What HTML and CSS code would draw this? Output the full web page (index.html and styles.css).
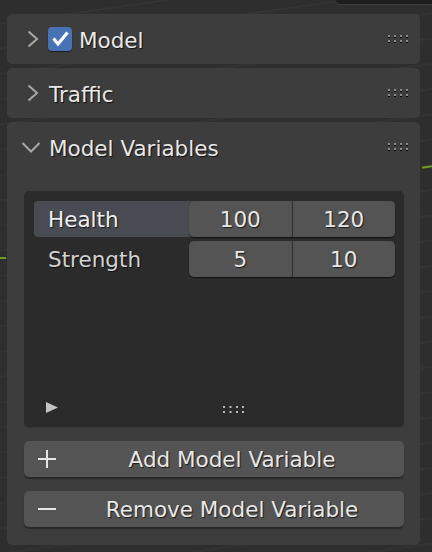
FILE: index.html
```html
<!DOCTYPE html>
<html>
<head>
<meta charset="utf-8">
<link rel="stylesheet" href="styles.css">
</head>
<body>
<div class="screen">
  <div class="topbar"></div>
  <div class="grass grass-left"></div>
  <div class="grass grass-right"></div>
  <div class="panels">
    <section class="panel">
      <div class="header">
        <svg class="chev" width="20" height="18" viewBox="0 0 20 18"><polyline points="7.5,1.5 16,9 7.5,16.5" fill="none" stroke="#a8a8a8" stroke-width="2"/></svg>
        <span class="checkbox"><svg width="24" height="24" viewBox="0 0 24 24"><polyline points="5.5,11.5 10,17 19.5,5.5" fill="none" stroke="#fff" stroke-width="3.2"/></svg></span>
        <span class="title title-check">Model</span>
        <svg class="grip" width="20" height="9" viewBox="0 0 20 9"><g fill="#8c8c8c"><rect x="0" y="0" width="2" height="2"/><rect x="6" y="0" width="2" height="2"/><rect x="12" y="0" width="2" height="2"/><rect x="18" y="0" width="2" height="2"/><rect x="0" y="5" width="2" height="2"/><rect x="6" y="5" width="2" height="2"/><rect x="12" y="5" width="2" height="2"/><rect x="18" y="5" width="2" height="2"/></g><g fill="#000"><rect x="0" y="2" width="2" height="1"/><rect x="6" y="2" width="2" height="1"/><rect x="12" y="2" width="2" height="1"/><rect x="18" y="2" width="2" height="1"/><rect x="0" y="7" width="2" height="1"/><rect x="6" y="7" width="2" height="1"/><rect x="12" y="7" width="2" height="1"/><rect x="18" y="7" width="2" height="1"/></g></svg>
      </div>
    </section>
    <section class="panel">
      <div class="header">
        <svg class="chev" width="20" height="18" viewBox="0 0 20 18"><polyline points="7.5,1.5 16,9 7.5,16.5" fill="none" stroke="#a8a8a8" stroke-width="2"/></svg>
        <span class="title">Traffic</span>
        <svg class="grip" width="20" height="9" viewBox="0 0 20 9"><g fill="#8c8c8c"><rect x="0" y="0" width="2" height="2"/><rect x="6" y="0" width="2" height="2"/><rect x="12" y="0" width="2" height="2"/><rect x="18" y="0" width="2" height="2"/><rect x="0" y="5" width="2" height="2"/><rect x="6" y="5" width="2" height="2"/><rect x="12" y="5" width="2" height="2"/><rect x="18" y="5" width="2" height="2"/></g><g fill="#000"><rect x="0" y="2" width="2" height="1"/><rect x="6" y="2" width="2" height="1"/><rect x="12" y="2" width="2" height="1"/><rect x="18" y="2" width="2" height="1"/><rect x="0" y="7" width="2" height="1"/><rect x="6" y="7" width="2" height="1"/><rect x="12" y="7" width="2" height="1"/><rect x="18" y="7" width="2" height="1"/></g></svg>
      </div>
    </section>
    <section class="panel panel-open">
      <div class="header">
        <svg class="chev" width="20" height="18" viewBox="0 0 20 18"><polyline points="1.5,5 10,13.5 18.5,5" fill="none" stroke="#a8a8a8" stroke-width="2"/></svg>
        <span class="title">Model Variables</span>
        <svg class="grip" width="20" height="9" viewBox="0 0 20 9"><g fill="#8c8c8c"><rect x="0" y="0" width="2" height="2"/><rect x="6" y="0" width="2" height="2"/><rect x="12" y="0" width="2" height="2"/><rect x="18" y="0" width="2" height="2"/><rect x="0" y="5" width="2" height="2"/><rect x="6" y="5" width="2" height="2"/><rect x="12" y="5" width="2" height="2"/><rect x="18" y="5" width="2" height="2"/></g><g fill="#000"><rect x="0" y="2" width="2" height="1"/><rect x="6" y="2" width="2" height="1"/><rect x="12" y="2" width="2" height="1"/><rect x="18" y="2" width="2" height="1"/><rect x="0" y="7" width="2" height="1"/><rect x="6" y="7" width="2" height="1"/><rect x="12" y="7" width="2" height="1"/><rect x="18" y="7" width="2" height="1"/></g></svg>
      </div>
      <div class="body">
        <div class="list">
          <div class="row row-active">
            <span class="label">Health</span>
            <div class="fields"><span class="field">100</span><span class="field">120</span></div>
          </div>
          <div class="row">
            <span class="label label-dim">Strength</span>
            <div class="fields"><span class="field">5</span><span class="field">10</span></div>
          </div>
          <div class="list-footer">
            <svg class="play" width="12" height="11" viewBox="0 0 12 11"><polygon points="0,0 12,5.5 0,11" fill="#c4c4c4"/></svg>
            <svg class="list-grip" width="21" height="8" viewBox="0 0 21 8"><g fill="#b8b8b8"><rect x="0" y="0" width="2" height="2"/><rect x="6.5" y="0" width="2" height="2"/><rect x="13" y="0" width="2" height="2"/><rect x="19" y="0" width="2" height="2"/><rect x="0" y="5" width="2" height="2"/><rect x="6.5" y="5" width="2" height="2"/><rect x="13" y="5" width="2" height="2"/><rect x="19" y="5" width="2" height="2"/></g></svg>
          </div>
        </div>
        <div class="button">
          <svg class="btn-icon" width="18" height="18" viewBox="0 0 18 18"><path d="M9 0V18M0 9H18" stroke="#e4e4e4" stroke-width="2" fill="none"/></svg>
          <span class="btn-text">Add Model Variable</span>
        </div>
        <div class="button">
          <svg class="btn-icon" width="18" height="18" viewBox="0 0 18 18"><path d="M0 9H18" stroke="#e4e4e4" stroke-width="2" fill="none"/></svg>
          <span class="btn-text">Remove Model Variable</span>
        </div>
      </div>
    </section>
  </div>
</div>
</body>
</html>
```

FILE: styles.css
```css
html, body {
  margin: 0;
  padding: 0;
}
body {
  width: 432px;
  height: 552px;
  overflow: hidden;
  background: #2f2f2f;
  font-family: "DejaVu Sans", "Liberation Sans", sans-serif;
  font-size: 21.5px;
  color: #e8e8e8;
}
.screen {
  position: relative;
  width: 432px;
  height: 552px;
  overflow: hidden;
  background:
    repeating-linear-gradient(172deg, rgba(255,255,255,0) 0px, rgba(255,255,255,0) 22px, rgba(255,255,255,0.035) 23px, rgba(255,255,255,0) 25px),
    #2e2e2e;
}
.topbar {
  position: absolute;
  left: 334px;
  top: -12px;
  width: 110px;
  height: 15px;
  background: #1e1e1e;
  border: 1px solid #3e3e3e;
  border-radius: 6px;
}
.grass {
  position: absolute;
  height: 2px;
  background: #6f9a2c;
}
.grass-left {
  left: 0;
  top: 257px;
  width: 6px;
}
.grass-right {
  left: 422px;
  top: 166px;
  width: 10px;
  transform: rotate(-8deg);
}
.panels {
  display: flex;
  flex-direction: column;
  gap: 4px;
  padding: 14px 0 0 7px;
  width: 413px;
}
.panel {
  background: #3d3d3d;
  border-radius: 5px;
}
.header {
  height: 50px;
  display: flex;
  align-items: center;
  padding: 0 12px 0 14px;
}
.chev {
  flex: none;
  display: block;
}
.title {
  margin-left: 8px;
  flex: 1;
  line-height: 1;
  text-shadow: 1px 1px 1px rgba(0,0,0,0.75);
  padding-top: 4px;
}
.title-check {
  margin-left: 7px;
}
.checkbox {
  flex: none;
  width: 24px;
  height: 24px;
  margin-left: 7px;
  background: #4772b3;
  border-radius: 4px;
  box-shadow: 0 1px 1px rgba(0,0,0,0.6);
}
.checkbox svg {
  display: block;
}
.grip {
  flex: none;
  display: block;
}
.body {
  display: flex;
  flex-direction: column;
  gap: 14px;
  padding: 19px 16px 18px 17px;
}
.list {
  height: 236px;
  background: #2b2b2b;
  border-radius: 5px;
  box-shadow: 0 1px 0 #333;
  display: flex;
  flex-direction: column;
  gap: 4px;
  padding: 10px 9px 9px 10px;
  box-sizing: border-box;
}
.row {
  height: 36px;
  display: flex;
  align-items: center;
  border-radius: 4px;
}
.row-active {
  background: #484b51;
}
.label {
  flex: 1;
  padding-left: 14px;
  text-shadow: 1px 1px 1px rgba(0,0,0,0.7);
  color: #f0f0f0;
}
.label-dim {
  color: #d2d2d2;
}
.fields {
  width: 206px;
  height: 36px;
  display: flex;
  gap: 1px;
  background: #2c2c2c;
  border-radius: 5px;
  overflow: hidden;
  box-shadow: 0 1px 1px rgba(0,0,0,0.6);
}
.field {
  flex: 1;
  display: flex;
  align-items: center;
  justify-content: center;
  background: #545454;
  text-shadow: 1px 1px 1px rgba(0,0,0,0.7);
}
.list-footer {
  margin-top: auto;
  height: 20px;
  display: flex;
  align-items: center;
}
.play {
  display: block;
  margin-left: 12px;
  margin-top: -1px;
}
.list-grip {
  display: block;
  margin-left: 165px;
  margin-top: 3px;
}
.button {
  height: 36px;
  display: flex;
  align-items: center;
  background: #545454;
  border-radius: 5px;
  box-shadow: 0 2px 1px rgba(0,0,0,0.35);
  padding-left: 14px;
}
.btn-icon {
  display: block;
  flex: none;
  margin-right: 4px;
}
.btn-text {
  flex: 1;
  text-align: center;
  text-shadow: 1px 1px 1px rgba(0,0,0,0.7);
}
```
